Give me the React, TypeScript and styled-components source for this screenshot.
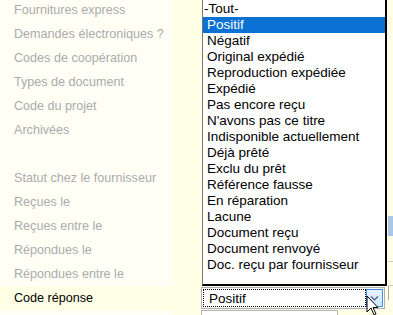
import React from "react";
import styled, { createGlobalStyle } from "styled-components";

const Global = createGlobalStyle`
  html, body { margin: 0; padding: 0; background: #fffff6; overflow: hidden; }
  body { font-family: "Liberation Sans", Arial, sans-serif; }
`;

const Page = styled.div`
  position: relative;
  width: 393px;
  height: 315px;
  overflow: hidden;
  background: #ffffe6;
`;

const Form = styled.div`
  display: grid;
  grid-template-columns: 173px 1fr;
  grid-auto-rows: 24px;
  margin-top: -2px;
`;

const Label = styled.div<{ $active?: boolean }>`
  display: flex;
  align-items: center;
  padding-left: 14px;
  font-size: 12.6px;
  white-space: nowrap;
  color: ${(p) => (p.$active ? "#000" : "#ababab")};
  background: ${(p) => (p.$active ? "#ffffe6" : "#fffff6")};
`;

const Value = styled.div`
  display: flex;
  align-items: center;
  gap: 3px;
  padding-left: 28px;
  background: #ffffe6;
  overflow: hidden;
`;

const Hidden = styled.div`
  width: 184px;
  flex: none;
`;

const Side = styled.div<{ $kind: "blue" | "line" | "edge" }>`
  flex: none;
  width: 20px;
  align-self: ${(p) => (p.$kind === "blue" ? "center" : "stretch")};
  height: ${(p) => (p.$kind === "blue" ? "20px" : "auto")};
  background: ${(p) => (p.$kind === "blue" ? "#a9c5ea" : "transparent")};
  border-bottom: ${(p) => (p.$kind === "line" ? "1px solid #c9c9c9" : "none")};
  border-left: ${(p) => (p.$kind === "edge" ? "1px solid #a8a8a8" : "none")};
  margin-bottom: ${(p) => (p.$kind === "edge" ? "10px" : "0")};
`;

const Field = styled.div<{ $w: number }>`
  flex: none;
  align-self: flex-start;
  width: ${(p) => p.$w}px;
  height: 22px;
  border: 1px solid #b4b4b4;
  background: #fff;
`;

const Select = styled.div`
  flex: none;
  display: flex;
  width: 182px;
  height: 20px;
  border: 1px solid #a9b0b8;
  background: #fff;
`;

const SelectInner = styled.div`
  display: flex;
  flex: 1;
  padding: 1px;
`;

const Focus = styled.div`
  flex: 1;
  display: flex;
  align-items: center;
  padding-left: 5px;
  border: 1px dotted #000;
  font-size: 13.5px;
  color: #000;
`;

const DropButton = styled.div`
  flex: none;
  width: 15px;
  display: flex;
  align-items: center;
  justify-content: center;
  border: 1px solid #3f8fdf;
  background: linear-gradient(#e6f2fe, #cfe4fb);
`;

const List = styled.div`
  position: absolute;
  left: 202px;
  top: 0;
  width: 182px;
  padding: 1px 0 11px;
  border-left: 1px solid #767676;
  border-right: 2px solid #000;
  border-bottom: 2px solid #000;
  background: #fff;
`;

const Option = styled.div<{ $selected?: boolean; $indent: number }>`
  height: 16px;
  line-height: 16px;
  padding-left: ${(p) => p.$indent}px;
  font-size: 13.5px;
  white-space: nowrap;
  color: ${(p) => (p.$selected ? "#fff" : "#000")};
  background: ${(p) => (p.$selected ? "#0b71d3" : "transparent")};
`;

const Cursor = styled.svg`
  position: absolute;
  left: 366px;
  top: 295px;
`;

type Row = { label: string; side?: "blue" | "line" | "edge" };

const rows: Row[] = [
  { label: "Fournitures express" },
  { label: "Demandes électroniques ?" },
  { label: "Codes de coopération" },
  { label: "Types de document" },
  { label: "Code du projet" },
  { label: "Archivées" },
  { label: "" },
  { label: "Statut chez le fournisseur" },
  { label: "Reçues le" },
  { label: "Reçues entre le", side: "blue" },
  { label: "Répondues le", side: "line" },
  { label: "Répondues entre le", side: "line" },
];

const options = [
  "-Tout-",
  "Positif",
  "Négatif",
  "Original expédié",
  "Reproduction expédiée",
  "Expédié",
  "Pas encore reçu",
  "N'avons pas ce titre",
  "Indisponible actuellement",
  "Déjà prêté",
  "Exclu du prêt",
  "Référence fausse",
  "En réparation",
  "Lacune",
  "Document reçu",
  "Document renvoyé",
  "Doc. reçu par fournisseur",
];

export default function App() {
  return (
    <Page>
      <Global />
      <Form>
        {rows.map((r, i) => (
          <React.Fragment key={i}>
            <Label>{r.label}</Label>
            <Value>
              <Hidden />
              {r.side && <Side $kind={r.side} />}
            </Value>
          </React.Fragment>
        ))}
        <Label $active>Code réponse</Label>
        <Value>
          <Select>
            <SelectInner>
              <Focus>Positif</Focus>
              <DropButton>
                <svg width="9" height="6" viewBox="0 0 9 6">
                  <path d="M1 1.5 L4.5 5 L8 1.5" fill="none" stroke="#4a5a78" strokeWidth="1.2" />
                </svg>
              </DropButton>
            </SelectInner>
          </Select>
          <Side $kind="edge" />
        </Value>
        <Label />
        <Value>
          <Field $w={135} />
        </Value>
      </Form>
      <List>
        {options.map((o, i) => (
          <Option key={o} $selected={i === 1} $indent={i === 0 ? 1 : 4}>
            {o}
          </Option>
        ))}
      </List>
      <Cursor width="13" height="21" viewBox="0 0 13 21">
        <path
          d="M1 1 L1 17 L5 13 L8 20 L10 19 L7 12.5 L12 12.5 Z"
          fill="#fff"
          stroke="#000"
          strokeWidth="1"
          strokeLinejoin="miter"
        />
      </Cursor>
    </Page>
  );
}
